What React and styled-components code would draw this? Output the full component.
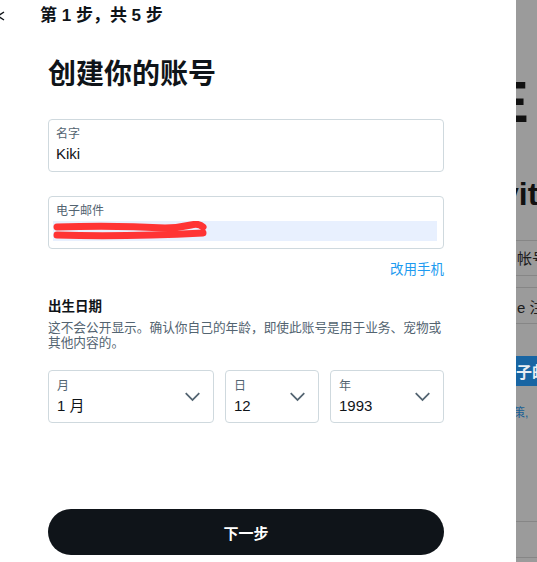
import React from "react";
import styled, { createGlobalStyle } from "styled-components";

const GlobalStyle = createGlobalStyle`
  html, body {
    margin: 0;
    padding: 0;
    background: #ffffff;
  }
  body {
    font-family: "Liberation Sans", "Noto Sans CJK SC", sans-serif;
    color: #0f1419;
  }
  * {
    box-sizing: border-box;
  }
`;

const Page = styled.div`
  display: flex;
  width: 537px;
  height: 562px;
  overflow: hidden;
`;

// Modal

const Modal = styled.div`
  width: 516px;
  flex-shrink: 0;
  background: #ffffff;
  display: flex;
  flex-direction: column;
`;

const Header = styled.div`
  display: flex;
  align-items: center;
  height: 32px;
`;

const BackButton = styled.button`
  width: 40px;
  height: 32px;
  padding: 0;
  border: none;
  background: none;
  display: flex;
  align-items: center;
  color: #0f1419;
  svg {
    margin-left: -4px;
  }
`;

const Step = styled.div`
  font-size: 17px;
  font-weight: 700;
  line-height: 20px;
`;

const Body = styled.div`
  display: flex;
  flex-direction: column;
  padding: 0 72px 0 48px;
`;

const Title = styled.h1`
  margin: 26px 0 0;
  font-size: 28px;
  font-weight: 700;
  line-height: 34px;
`;

const Field = styled.label`
  display: flex;
  flex-direction: column;
  height: 53px;
  margin-top: ${(p) => p.$top}px;
  padding: 6px 8px 0 7px;
  border: 1px solid #cfd9de;
  border-radius: 4px;
`;

const FieldLabel = styled.span`
  font-size: 12px;
  line-height: 16px;
  color: #536471;
`;

const FieldValue = styled.span`
  margin-top: 2px;
  font-size: 15px;
  line-height: 20px;
  color: #0f1419;
`;

const AutofillValue = styled.span`
  display: flex;
  align-items: center;
  height: 20px;
  margin: 2px -2px 0 -3px;
  background: #e8f0fe;
`;

const LinkRow = styled.div`
  display: flex;
  justify-content: flex-end;
  margin-top: 12px;
`;

const Link = styled.a`
  font-size: 13.5px;
  line-height: 18px;
  color: #1d9bf0;
  text-decoration: none;
`;

const SectionTitle = styled.div`
  margin-top: 19px;
  font-size: 13.5px;
  font-weight: 700;
  line-height: 18px;
`;

const Hint = styled.p`
  margin: 5px 0 0;
  font-size: 12.7px;
  line-height: 15px;
  color: #536471;
`;

const SelectRow = styled.div`
  display: flex;
  gap: 11px;
  margin-top: 19px;
`;

const Select = styled.div`
  display: flex;
  align-items: center;
  justify-content: space-between;
  width: ${(p) => p.$width}px;
  height: 53px;
  padding: 0 10px 0 8px;
  border: 1px solid #cfd9de;
  border-radius: 4px;
  color: #536471;
`;

const SelectText = styled.div`
  display: flex;
  flex-direction: column;
`;

const Button = styled.button`
  margin-top: 86px;
  height: 46px;
  border: none;
  border-radius: 23px;
  background: #0f1419;
  color: #ffffff;
  font-family: inherit;
  font-size: 15px;
  font-weight: 700;
`;

// Dimmed page behind the modal

const Backdrop = styled.div`
  flex: 1;
  background: #9b9b9b;
  overflow: hidden;
  display: flex;
  flex-direction: column;
  white-space: nowrap;
`;

const BigText = styled.div`
  margin: ${(p) => p.$top}px 0 0 ${(p) => p.$left}px;
  font-size: ${(p) => p.$size}px;
  font-weight: 700;
  line-height: 1;
  color: #111111;
`;

const BgLine = styled.div`
  height: 1px;
  margin-top: ${(p) => p.$top}px;
  background: #868686;
`;

const BgText = styled.div`
  margin-top: ${(p) => p.$top}px;
  padding-left: 1px;
  font-size: 15px;
  line-height: 20px;
  color: #1c1c1c;
`;

const BgButton = styled.div`
  margin-top: ${(p) => p.$top}px;
  height: 30px;
  display: flex;
  align-items: center;
  background: #1865a3;
  color: #e8eef3;
  font-size: 16px;
  font-weight: 700;
`;

const BgLink = styled.div`
  margin: 20px 0 0 -3px;
  font-size: 12px;
  line-height: 14px;
  color: #1a5f95;
`;

const Chevron = () => (
  <svg width="21" height="21" viewBox="0 0 24 24" fill="currentColor">
    <path d="M3.543 8.96l1.414-1.42L12 14.59l7.043-7.05 1.414 1.42L12 17.41 3.543 8.96z" />
  </svg>
);

const selects = [
  { label: "月", value: "1 月", width: 166 },
  { label: "日", value: "12", width: 94 },
  { label: "年", value: "1993", width: 114 },
];

export default function App() {
  return (
    <Page>
      <GlobalStyle />
      <Modal>
        <Header>
          <BackButton aria-label="返回">
            <svg width="12" height="12" viewBox="0 0 12 12" fill="none">
              <polyline points="8,2 2,6 8,10" stroke="currentColor" strokeWidth="1.4" />
            </svg>
          </BackButton>
          <Step>第 1 步，共 5 步</Step>
        </Header>
        <Body>
          <Title>创建你的账号</Title>
          <Field $top={27}>
            <FieldLabel>名字</FieldLabel>
            <FieldValue>Kiki</FieldValue>
          </Field>
          <Field $top={24}>
            <FieldLabel>电子邮件</FieldLabel>
            <AutofillValue>
              <svg width="160" height="20" viewBox="0 0 160 20" fill="none">
                <path d="M4 6 Q60 4 112 7 Q125 7 138 4 Q146 2 150 6" stroke="#ff3434" strokeWidth="7" strokeLinecap="round" />
                <path d="M4 14 Q70 16 150 12" stroke="#ff3434" strokeWidth="7" strokeLinecap="round" />
              </svg>
            </AutofillValue>
          </Field>
          <LinkRow>
            <Link href="#">改用手机</Link>
          </LinkRow>
          <SectionTitle>出生日期</SectionTitle>
          <Hint>这不会公开显示。确认你自己的年龄，即使此账号是用于业务、宠物或其他内容的。</Hint>
          <SelectRow>
            {selects.map((s) => (
              <Select key={s.label} $width={s.width}>
                <SelectText>
                  <FieldLabel>{s.label}</FieldLabel>
                  <FieldValue>{s.value}</FieldValue>
                </SelectText>
                <Chevron />
              </Select>
            ))}
          </SelectRow>
          <Button>下一步</Button>
        </Body>
      </Modal>
      <Backdrop>
        <BigText $top={73} $left={-26} $size={58}>E</BigText>
        <BigText $top={47} $left={-15} $size={32}>vit</BigText>
        <BgLine $top={30} />
        <BgText $top={8}>帐号</BgText>
        <BgLine $top={6} />
        <BgLine $top={11} />
        <BgText $top={10}>e 注</BgText>
        <BgLine $top={5} />
        <BgButton $top={32}>子邮</BgButton>
        <BgLink>策,</BgLink>
        <BgLine $top={101} />
        <BgLine $top={35} />
      </Backdrop>
    </Page>
  );
}
